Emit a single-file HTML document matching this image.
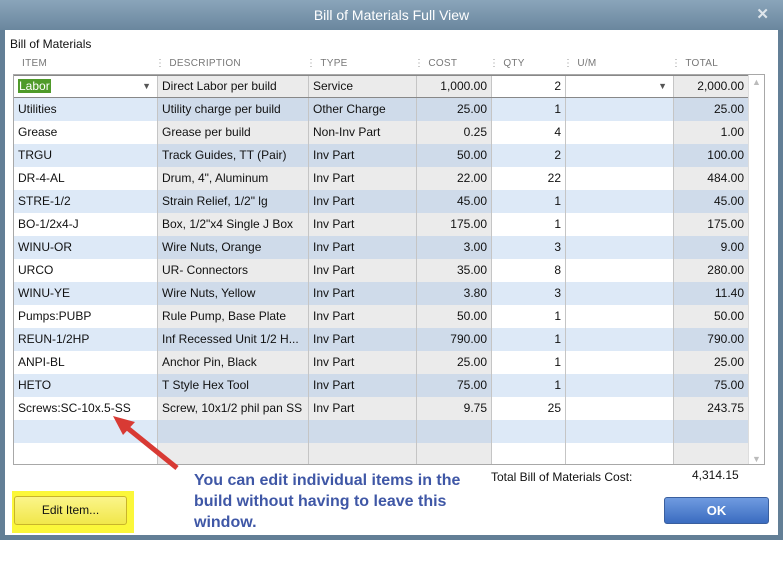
<!DOCTYPE html>
<html><head><style>
*{margin:0;padding:0;box-sizing:border-box}
body{width:783px;height:562px;background:#fff;position:relative;overflow:hidden;font-family:"Liberation Sans",sans-serif;font-size:12px;color:#111}
.frame{position:absolute;left:0;top:0;width:783px;height:540px;background:#637f96}
.title{position:absolute;left:0;top:0;width:783px;height:30px;background:linear-gradient(#8aa5ba,#6a879e);color:#fff;font-size:14px;text-align:center;line-height:30px}
.x{position:absolute;right:14px;top:0;color:#dfe6ec;font-size:15px;font-weight:bold}
.content{position:absolute;left:5px;top:30px;width:773px;height:505px;background:#fff}
.lbl{position:absolute;left:10px;top:37px}
.hd{position:absolute;top:58px;font-size:10px;color:#777;letter-spacing:.3px}
.hd i{color:#999;font-style:normal;margin-right:4px}
.tbl{position:absolute;left:13px;top:74px;width:752px;height:391px;border:1px solid #a8a8a8;overflow:hidden;background:#fff}
.row{position:absolute;left:0;height:23px;width:735px}
.c{position:absolute;top:0;height:23px;line-height:23px;padding:0 4px;border-right:1px solid #c5c5c5;white-space:nowrap;overflow:hidden}
.r{text-align:right}
.sb{position:absolute;right:0;top:0;width:16px;height:391px;background:#fff;border-left:1px solid #ddd}
.btn{position:absolute}
</style></head><body>
<div class="frame"></div>
<div class="title">Bill of Materials Full View<span class="x">✕</span></div>
<div class="content"></div>
<div class="lbl">Bill of Materials</div>
<div class="hd" style="left:22px">ITEM</div>
<div class="hd" style="left:155px"><i>⋮</i>DESCRIPTION</div>
<div class="hd" style="left:306px"><i>⋮</i>TYPE</div>
<div class="hd" style="left:414px"><i>⋮</i>COST</div>
<div class="hd" style="left:489px"><i>⋮</i>QTY</div>
<div class="hd" style="left:563px"><i>⋮</i>U/M</div>
<div class="hd" style="left:671px"><i>⋮</i>TOTAL</div>
<div class="tbl" id="t"><div class="sb"><div style="color:#bbb;font-size:9px;text-align:center;margin-top:2px">▲</div><div style="color:#bbb;font-size:9px;text-align:center;position:absolute;bottom:2px;width:15px">▼</div></div></div>
<div style="position:absolute;left:12px;top:491px;width:122px;height:42px;background:#fbf73a"></div>
<div style="position:absolute;left:14px;top:496px;width:113px;height:29px;border:1px solid #c9b42a;border-radius:3px;background:linear-gradient(#fbf58a,#f1e74a);text-align:center;line-height:27px">Edit Item...</div>
<div style="position:absolute;left:194px;top:470px;width:290px;color:#3f57a6;font-weight:bold;font-size:16px;line-height:21px">You can edit individual items in the build without having to leave this window.</div>
<div style="position:absolute;left:491px;top:470px">Total Bill of Materials Cost:</div>
<div style="position:absolute;left:692px;top:468px">4,314.15</div>
<div style="position:absolute;left:664px;top:497px;width:105px;height:27px;border:1px solid #3a5f9e;border-radius:3px;background:linear-gradient(#6f9be0,#3b6cc0);color:#fff;font-weight:bold;text-align:center;line-height:25px;font-size:13px">OK</div>
<svg style="position:absolute;left:105px;top:410px" width="80" height="65"><line x1="72" y1="58" x2="20" y2="16" stroke="#d83a34" stroke-width="5"/><polygon points="8,6 30,12 18,25" fill="#d83a34"/></svg>
<script>
var d=[["Labor","Direct Labor per build","Service","1,000.00","2","2,000.00"],["Utilities","Utility charge per build","Other Charge","25.00","1","25.00"],["Grease","Grease per build","Non-Inv Part","0.25","4","1.00"],["TRGU","Track Guides, TT (Pair)","Inv Part","50.00","2","100.00"],["DR-4-AL","Drum, 4\", Aluminum","Inv Part","22.00","22","484.00"],["STRE-1/2","Strain Relief, 1/2\" lg","Inv Part","45.00","1","45.00"],["BO-1/2x4-J","Box, 1/2\"x4 Single J Box","Inv Part","175.00","1","175.00"],["WINU-OR","Wire Nuts, Orange","Inv Part","3.00","3","9.00"],["URCO","UR- Connectors","Inv Part","35.00","8","280.00"],["WINU-YE","Wire Nuts, Yellow","Inv Part","3.80","3","11.40"],["Pumps:PUBP","Rule Pump, Base Plate","Inv Part","50.00","1","50.00"],["REUN-1/2HP","Inf Recessed Unit 1/2 H...","Inv Part","790.00","1","790.00"],["ANPI-BL","Anchor Pin, Black","Inv Part","25.00","1","25.00"],["HETO","T Style Hex Tool","Inv Part","75.00","1","75.00"],["Screws:SC-10x5-SS","Screw, 10x1/2 phil pan SS","Inv Part","9.75","25","243.75"],["","","","","",""],["","","","","",""]];
d[14][0]="Screws:SC-10x.5-SS";
var cols=[[0,144],[144,151],[295,108],[403,75],[478,74],[552,108],[660,75]];
var h="";
d.forEach(function(r,i){var blue=i%2==1;var base=blue?"#dde9f7":"#fff";var g=blue?"#cfdbea":"#ebebeb";
h+='<div class="row" style="top:'+(i*23)+'px;background:'+base+'">';
var v=[r[0],r[1],r[2],r[3],r[4],"",r[5]];
cols.forEach(function(c,j){var gr=(j==1||j==2||j==3||j==6);var bg=gr?g:base;if(i==0&&(j==0||j==4||j==5))bg="#fff";
var t=v[j];if(i==0&&j==0)t='<span style="background:#4f9a2a;color:#fff;padding:0 1px">Labor</span><span style="position:absolute;right:6px;color:#555;font-size:9px">▼</span>';
if(i==0&&j==5)t='<span style="position:absolute;right:6px;color:#555;font-size:9px">▼</span>';
h+='<div class="c'+((j==3||j==4||j==6)?' r':'')+'" style="left:'+c[0]+'px;width:'+c[1]+'px;background:'+bg+'">'+t+'</div>';});
h+='</div>';});
h+='<div style="position:absolute;left:0;top:0;width:735px;height:23px;border:1px solid #888;border-left:0"></div>';
document.getElementById("t").insertAdjacentHTML("afterbegin",h);
</script>
</body></html>
